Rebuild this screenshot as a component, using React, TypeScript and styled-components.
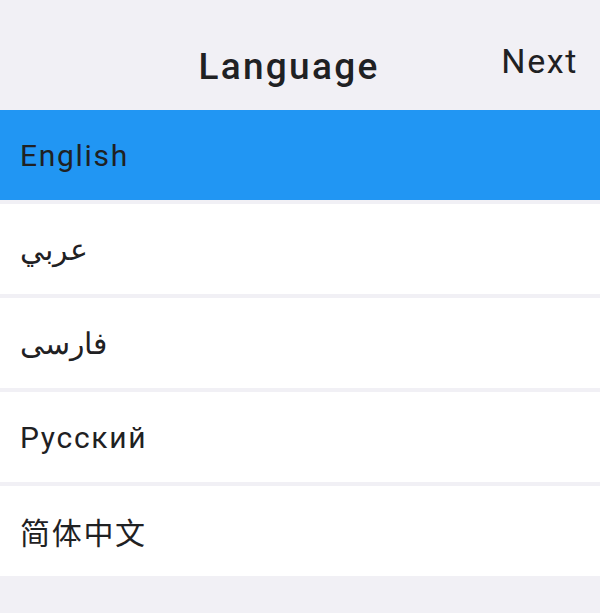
import React, { useState } from "react";
import styled, { createGlobalStyle } from "styled-components";

const GlobalStyle = createGlobalStyle`
  html, body {
    margin: 0;
    padding: 0;
    background: #f1f0f5;
    font-family: Roboto, "Noto Sans", "Noto Sans CJK SC", sans-serif;
    color: #1f2123;
  }
`;

const Screen = styled.div`
  width: 600px;
  min-height: 613px;
  background: #f1f0f5;
`;

const Header = styled.header`
  height: 110px;
  display: grid;
  grid-template-columns: 1fr auto 1fr;
  align-items: center;
  padding: 0 22px 0 0;
  box-sizing: border-box;
`;

const Title = styled.h1`
  grid-column: 2;
  margin: 22px 0 0;
  font-size: 37px;
  font-weight: 500;
  letter-spacing: 2.3px;
`;

const NextButton = styled.button`
  grid-column: 3;
  justify-self: end;
  margin-top: 12px;
  border: 0;
  background: none;
  padding: 0;
  font-family: inherit;
  font-size: 34px;
  font-weight: 400;
  letter-spacing: 1.6px;
  color: #1f2123;
`;

const List = styled.ul`
  list-style: none;
  margin: 0;
  padding: 0;
  display: flex;
  flex-direction: column;
  gap: 4px;
`;

const Row = styled.li<{ $selected: boolean }>`
  height: 90px;
  display: flex;
  align-items: center;
  padding: 0 20px;
  background: ${(p) => (p.$selected ? "#2196f3" : "#ffffff")};
  font-size: 30px;
  letter-spacing: 1.7px;
  cursor: pointer;
`;

const languages = ["English", "عربي", "فارسی", "Русский", "简体中文"];

export default function App() {
  const [selected, setSelected] = useState("English");
  return (
    <Screen>
      <GlobalStyle />
      <Header>
        <Title>Language</Title>
        <NextButton>Next</NextButton>
      </Header>
      <List>
        {languages.map((lang) => (
          <Row
            key={lang}
            $selected={lang === selected}
            onClick={() => setSelected(lang)}
          >
            {lang}
          </Row>
        ))}
      </List>
    </Screen>
  );
}
